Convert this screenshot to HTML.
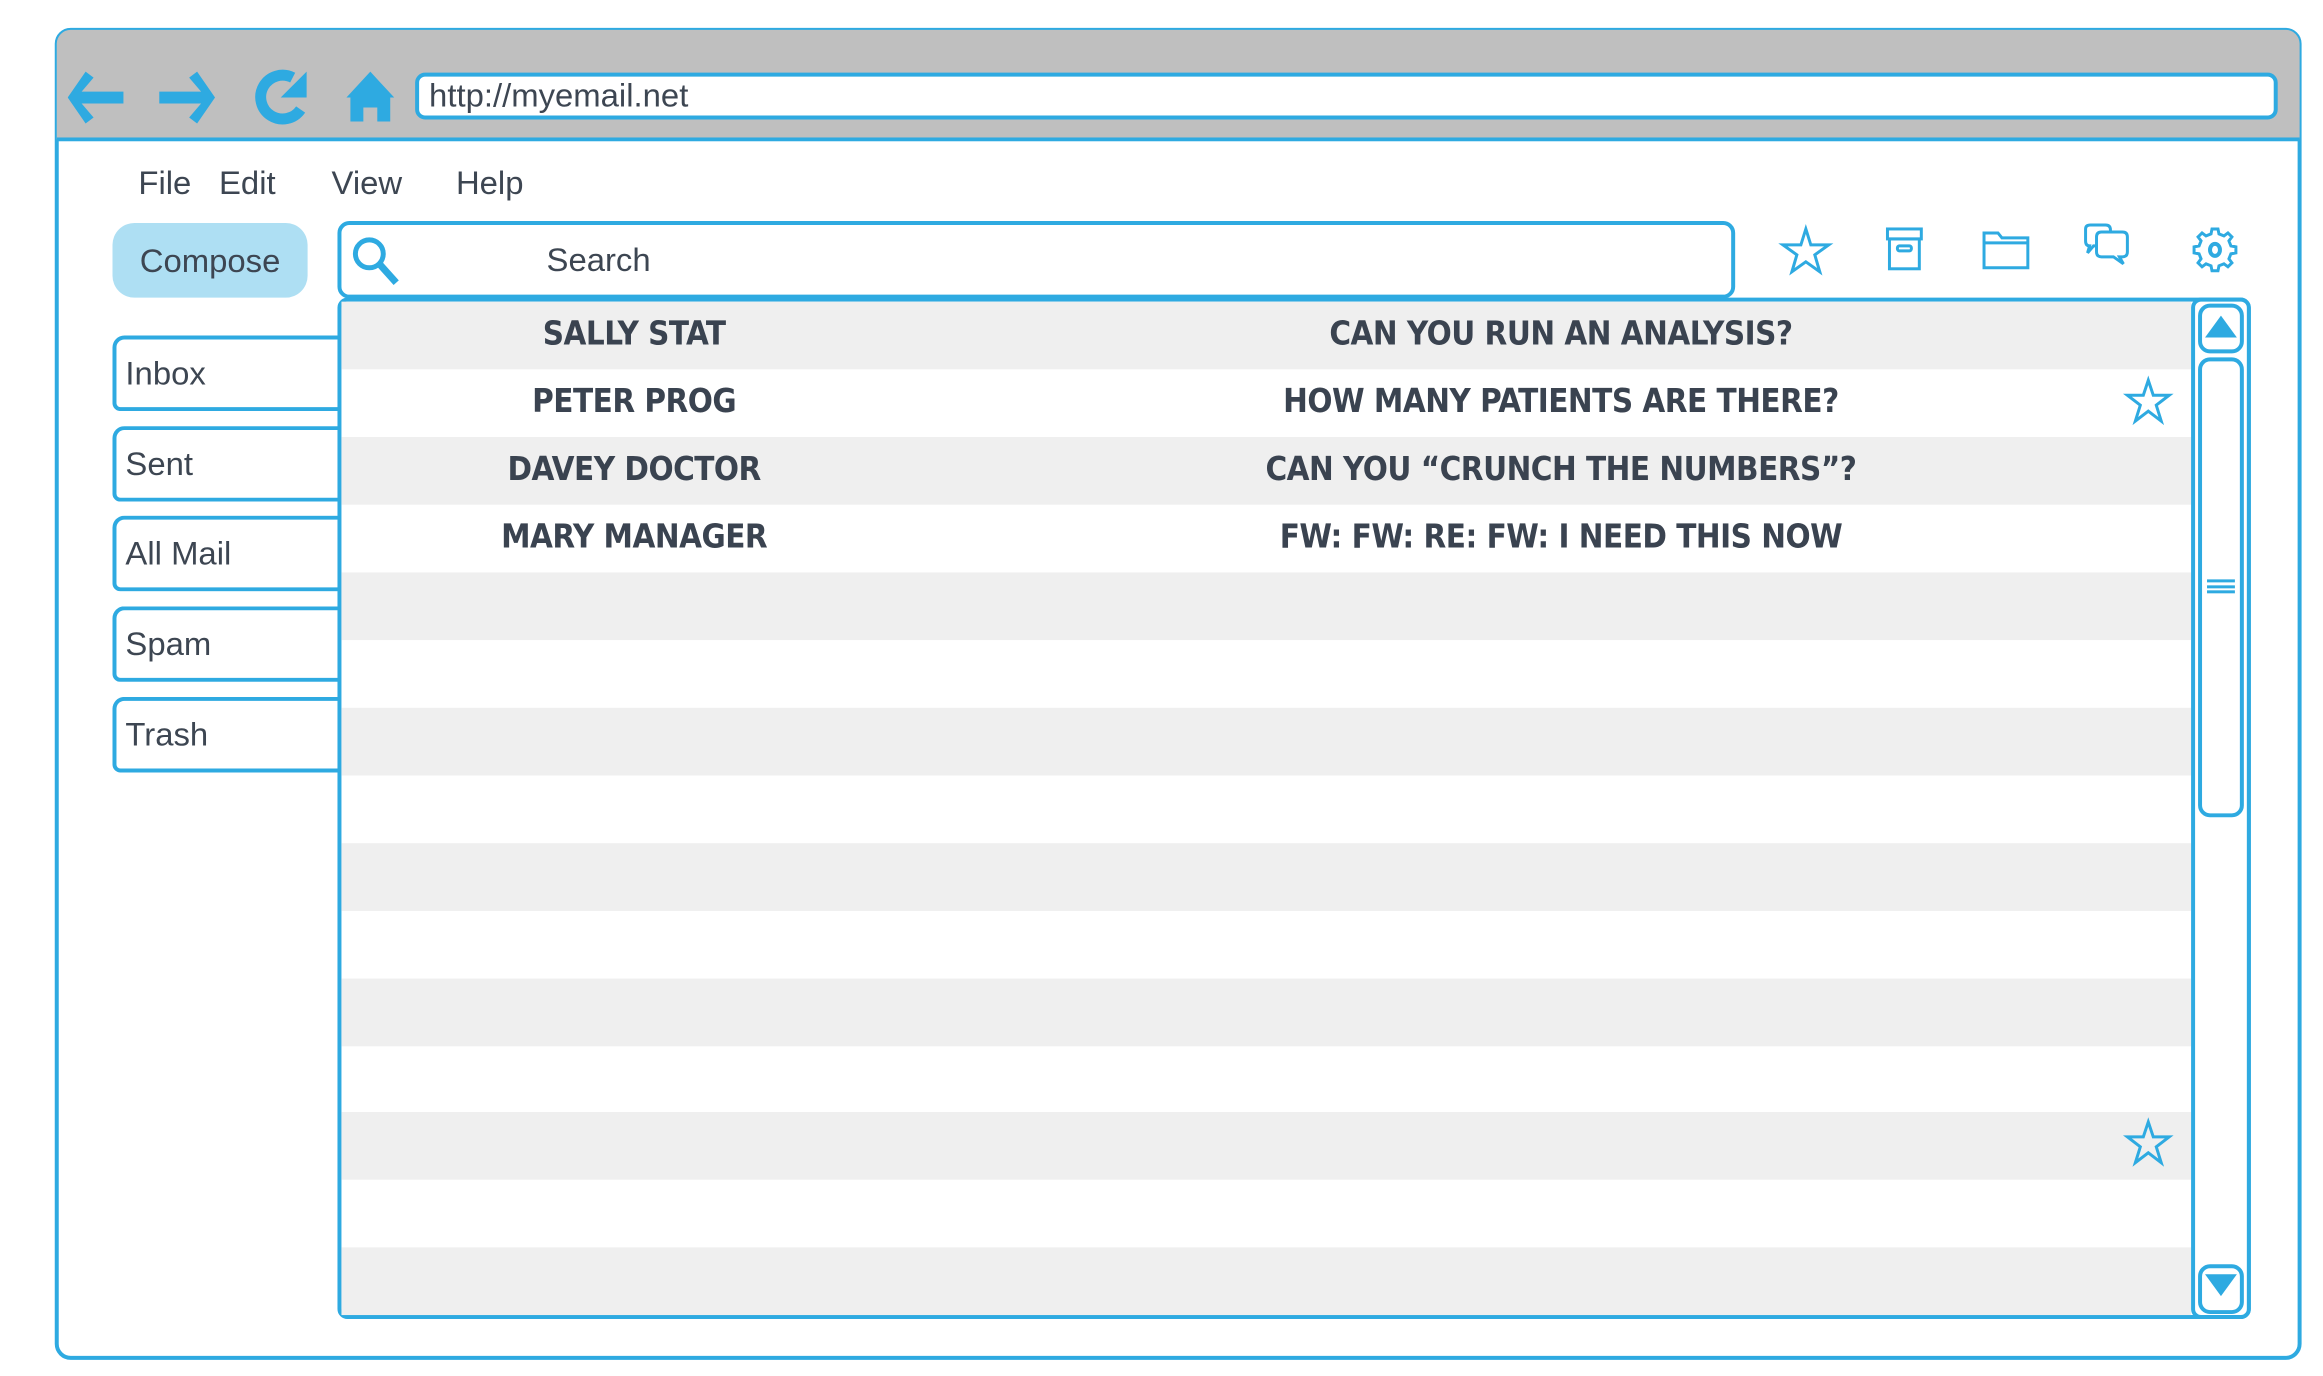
<!DOCTYPE html>
<html><head><meta charset="utf-8"><style>
*{margin:0;padding:0;box-sizing:border-box}
body{width:2323px;height:1376px;background:#fff;position:relative;overflow:hidden;font-family:"Liberation Sans",sans-serif;color:#3d4652}
#w{position:absolute;left:0;top:0;width:2323px;height:1376px;transform:scale(0.9955);transform-origin:0 0}
.a{position:absolute}
.b{border:4px solid #2eaae1}
.menu{font-size:33px;top:165px}
.tab{position:absolute;left:113px;width:232px;height:76px;border:4px solid #2eaae1;border-right:none;border-radius:12px 0 0 8px;background:#fff;font-size:33px;padding-left:9px;line-height:68px}
.row{position:absolute;left:343px;width:1858px;height:68px}
.g{background:#efefef}
.t{position:absolute;font-family:"DejaVu Sans Condensed","Liberation Sans Narrow",sans-serif;font-weight:bold;font-size:33px;top:12px;transform:translateX(-50%);white-space:nowrap;color:#3a4350;letter-spacing:-0.5px}
</style></head><body><div id="w">
<div class="a b" style="left:55px;top:28px;width:2257px;height:1338px;border-radius:16px"></div>
<div class="a" style="left:57px;top:30px;width:2253px;height:112px;background:#bfbfbf;border-radius:14px 14px 0 0;border-bottom:4px solid #2eaae1"></div>
<svg class="a" style="left:68px;top:68px" width="350" height="62" viewBox="0 0 350 62">
<path d="M0 30 L18 4 L26 10 L14 24 L56 24 L56 36 L14 36 L26 50 L18 56 Z" fill="#2eaae1"/>
<path d="M148 30 L130 4 L122 10 L134 24 L92 24 L92 36 L134 36 L122 50 L130 56 Z" fill="#2eaae1"/>
<path d="M226 10 A22 22 0 1 0 234 42" fill="none" stroke="#2eaae1" stroke-width="11"/>
<path d="M240 4 L240 30 L214 30 Z" fill="#2eaae1"/>
<path d="M280 30 L284 30 L284 54 L297 54 L297 40 L311 40 L311 54 L324 54 L324 30 L328 30 L304 4 Z" fill="#2eaae1"/>
</svg>
<div class="a b" style="left:417px;top:73px;width:1871px;height:47px;background:#fff;border-radius:10px;font-size:33px;padding-left:10px;line-height:38px">http://myemail.net</div>
<div class="a menu" style="left:139px">File</div>
<div class="a menu" style="left:220px">Edit</div>
<div class="a menu" style="left:333px">View</div>
<div class="a menu" style="left:458px">Help</div>
<div class="a" style="left:113px;top:224px;width:196px;height:75px;background:#aedff3;border-radius:22px;font-size:33px;text-align:center;line-height:75px">Compose</div>
<div class="a b" style="left:339px;top:222px;width:1404px;height:78px;border-radius:12px;background:#fff;font-size:33px;line-height:70px;padding-left:206px">Search</div>
<svg class="a" style="left:352px;top:236px" width="55" height="55" viewBox="0 0 55 55"><circle cx="19" cy="19" r="14" fill="none" stroke="#2eaae1" stroke-width="5"/><path d="M29 29 L46 48" stroke="#2eaae1" stroke-width="7"/></svg>
<svg class="a" style="left:1785px;top:222px" width="480" height="60" viewBox="0 0 480 60" fill="none" stroke="#2eaae1" stroke-width="3">
<path d="M29 8 L34 24 L52 24 L38 34 L43 51 L29 41 L15 51 L20 34 L6 24 L24 24 Z"/>
<rect x="111" y="8" width="34" height="10"/><rect x="113" y="18" width="30" height="30"/><rect x="121" y="25" width="14" height="5" rx="2"/>
<path d="M208 12 L222 12 L226 17 L252 17 L252 47 L208 47 Z M208 22 L252 22"/>
<path d="M322 25 L318 25 L312 32 L314 25 Q310 25 310 20 L310 8 Q310 4 315 4 L330 4 Q335 4 335 9 L335 11"/>
<path d="M326 11 L347 11 Q352 11 352 16 L352 31 Q352 36 347 36 L344 36 L348 43 L338 36 L326 36 Q321 36 321 31 L321 16 Q321 11 326 11 Z"/>
<path d="M437 8 L443 8 L444 13 L449 15 L453 12 L457 16 L454 20 L456 25 L461 26 L461 32 L456 33 L454 38 L457 42 L453 46 L449 43 L444 45 L443 50 L437 50 L436 45 L431 43 L427 46 L423 42 L426 38 L424 33 L419 32 L419 26 L424 25 L426 20 L423 16 L427 12 L431 15 L436 13 Z"/>
<ellipse cx="440" cy="29" rx="5" ry="6" stroke-width="4"/>
</svg>
<div class="tab" style="top:337px">Inbox</div>
<div class="tab" style="top:428px">Sent</div>
<div class="tab" style="top:518px">All Mail</div>
<div class="tab" style="top:609px">Spam</div>
<div class="tab" style="top:700px">Trash</div>
<div class="a b" style="left:339px;top:299px;width:1922px;height:1026px;border-radius:10px;background:#fff"></div>
<div class="row g" style="top:303px"><span class="t" style="left:294px">SALLY STAT</span><span class="t" style="left:1225px">CAN YOU RUN AN ANALYSIS?</span></div>
<div class="row" style="top:371px"><span class="t" style="left:294px">PETER PROG</span><span class="t" style="left:1225px">HOW MANY PATIENTS ARE THERE?</span></div>
<div class="row g" style="top:439px"><span class="t" style="left:294px">DAVEY DOCTOR</span><span class="t" style="left:1225px">CAN YOU “CRUNCH THE NUMBERS”?</span></div>
<div class="row" style="top:507px"><span class="t" style="left:294px">MARY MANAGER</span><span class="t" style="left:1225px">FW: FW: RE: FW: I NEED THIS NOW</span></div>
<div class="row g" style="top:575px"></div>
<div class="row g" style="top:711px"></div>
<div class="row g" style="top:847px"></div>
<div class="row g" style="top:983px"></div>
<div class="row g" style="top:1117px"></div>
<div class="row g" style="top:1253px;height:68px"></div>
<svg class="a" style="left:2132px;top:377px" width="52" height="52" viewBox="0 0 52 52"><path d="M26 5 L31 20 L47 20 L34 30 L39 46 L26 36 L13 46 L18 30 L5 20 L21 20 Z" fill="none" stroke="#2eaae1" stroke-width="3"/></svg>
<svg class="a" style="left:2132px;top:1122px" width="52" height="52" viewBox="0 0 52 52"><path d="M26 5 L31 20 L47 20 L34 30 L39 46 L26 36 L13 46 L18 30 L5 20 L21 20 Z" fill="none" stroke="#2eaae1" stroke-width="3"/></svg>
<div class="a b" style="left:2201px;top:299px;width:60px;height:1026px;border-radius:10px;background:#fff"></div>
<div class="a b" style="left:2208px;top:305px;width:46px;height:50px;border-radius:12px"></div>
<svg class="a" style="left:2213px;top:313px" width="36" height="30"><path d="M2 26 L18 4 L34 26 Z" fill="#2eaae1"/></svg>
<div class="a b" style="left:2208px;top:359px;width:46px;height:462px;border-radius:12px"></div>
<div class="a" style="left:2217px;top:582px;width:28px;height:14px;border-top:3px solid #2eaae1;border-bottom:3px solid #2eaae1"></div>
<div class="a" style="left:2217px;top:588px;width:28px;height:3px;background:#2eaae1"></div>
<div class="a b" style="left:2208px;top:1270px;width:46px;height:50px;border-radius:12px"></div>
<svg class="a" style="left:2213px;top:1276px" width="36" height="30"><path d="M2 4 L18 26 L34 4 Z" fill="#2eaae1"/></svg>
</div></body></html>
